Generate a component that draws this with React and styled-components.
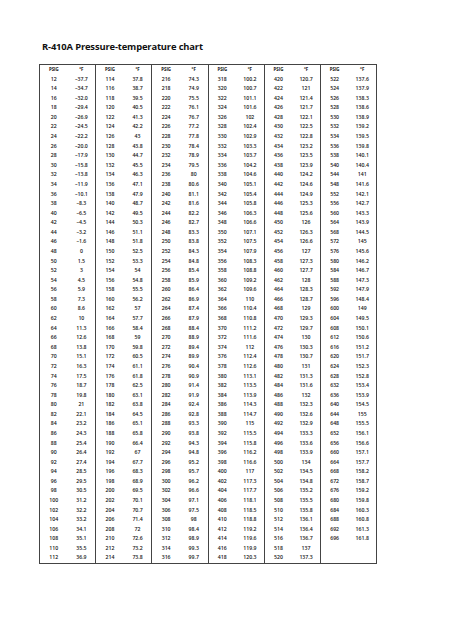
import React from "react";
import styled, { createGlobalStyle } from "styled-components";

const GlobalStyle = createGlobalStyle`
  html, body {
    margin: 0;
    padding: 0;
    background: #ffffff;
  }
  body {
    font-family: "Open Sans", "Liberation Sans", sans-serif;
    color: #1a1a1a;
  }
`;

// degrees F for each pair of columns, psig is worked out from the row
const temps = [
  [-37.7, -34.7, "-32.0", -29.4, -26.9, -24.5, -22.2, "-20.0", -17.9, -15.8, -13.8, -11.9, -10.1, -8.3, -6.5, -4.5, -3.2, -1.6, 0, 1.5, 3, 4.5, 5.9, 7.3, 8.6, 10, 11.3, 12.6, 13.8, 15.1, 16.3, 17.5, 18.7, 19.8, 21, 22.1, 23.2, 24.3, 25.4, 26.4, 27.4, 28.5, 29.5, 30.5, 31.2, 32.2, 33.2, 34.1, 35.1, 35.5, 36.9],
  [37.8, 38.7, 39.5, 40.5, 41.3, 42.2, 43, 43.8, 44.7, 45.5, 46.3, 47.1, 47.9, 48.7, 49.5, 50.3, 51.1, 51.8, 52.5, 53.3, 54, 54.8, 55.5, 56.2, 57, 57.7, 58.4, 59, 59.8, 60.5, 61.1, 61.8, 62.5, 63.1, 63.8, 64.5, 65.1, 65.8, 66.4, 67, 67.7, 68.3, 68.9, 69.5, 70.1, 70.7, 71.4, 72, 72.6, 73.2, 73.8],
  [74.3, 74.9, 75.5, 76.1, 76.7, 77.2, 77.8, 78.4, 78.9, 79.5, 80, 80.6, 81.1, 81.6, 82.2, 82.7, 83.3, 83.8, 84.3, 84.8, 85.4, 85.9, 86.4, 86.9, 87.4, 87.9, 88.4, 88.9, 89.4, 89.9, 90.4, 90.9, 91.4, 91.9, 92.4, 92.8, 93.3, 93.8, 94.3, 94.8, 95.2, 95.7, 96.2, 96.6, 97.1, 97.5, 98, 98.4, 98.9, 99.3, 99.7],
  [100.2, 100.7, 101.1, 101.6, 102, 102.4, 102.9, 103.3, 103.7, 104.2, 104.6, 105.1, 105.4, 105.8, 106.3, 106.6, 107.1, 107.5, 107.9, 108.3, 108.8, 109.2, 109.6, 110, 110.4, 110.8, 111.2, 111.6, 112, 112.4, 112.6, 113.1, 113.5, 113.9, 114.3, 114.7, 115, 115.5, 115.8, 116.2, 116.6, 117, 117.3, 117.7, 118.1, 118.5, 118.8, 119.2, 119.6, 119.9, 120.3],
  [120.7, 121, 121.4, 121.7, 122.1, 122.5, 122.8, 123.2, 123.5, 123.9, 124.2, 124.6, 124.9, 125.3, 125.6, 126, 126.3, 126.6, 127, 127.3, 127.7, 128, 128.3, 128.7, 129, 129.3, 129.7, 130, 130.3, 130.7, 131, 131.3, 131.6, 132, 132.3, 132.6, 132.9, 133.3, 133.6, 133.9, 134, 134.5, 134.8, 135.2, 135.5, 135.8, 136.1, 136.4, 136.7, 137, 137.3],
  [137.6, 137.9, 138.3, 138.6, 138.9, 139.2, 139.5, 139.8, 140.1, 140.4, 141, 141.6, 142.1, 142.7, 143.3, 143.9, 144.5, 145, 145.6, 146.2, 146.7, 147.3, 147.9, 148.4, 149, 149.5, 150.1, 150.6, 151.2, 151.7, 152.3, 152.8, 153.4, 153.9, 154.5, 155, 155.5, 156.1, 156.6, 157.1, 157.7, 158.2, 158.7, 159.2, 159.8, 160.3, 160.8, 161.3, 161.8],
];

const ROWS = 51;

function psigFor(pair, i) {
  if (pair < 5) return 12 + pair * 102 + i * 2;
  return i < 10 ? 522 + i * 2 : 540 + (i - 9) * 4;
}

function fmt(v) {
  return String(v).replace("-", "\u2013");
}

const Page = styled.div`
  padding: 41px 0 0 39px;
`;

const Title = styled.h1`
  margin: 0 0 11px 3px;
  font-family: "Open Sans", "Liberation Sans", sans-serif;
  font-size: 9.4px;
  line-height: 12px;
  font-weight: 700;
  letter-spacing: -0.15px;
  color: #111;
`;

const Chart = styled.div`
  display: flex;
  width: 336px;
  border: 1px solid #444;
`;

const Pair = styled.div`
  flex: 1;
  display: flex;
  flex-direction: column;
  border-left: ${(p) => (p.$first ? "none" : "1px solid #444")};
`;

const Row = styled.div`
  display: grid;
  grid-template-columns: 1fr 1fr;
  height: 9.59px;
  line-height: 9.59px;
  font-size: ${(p) => (p.$head ? "4.4px" : "5.2px")};
  font-weight: ${(p) => (p.$head ? 700 : 600)};
  color: #151515;
`;

const Cell = styled.span`
  text-align: center;
  white-space: nowrap;
`;

export default function App() {
  return (
    <Page>
      <GlobalStyle />
      <Title>R-410A Pressure-temperature chart</Title>
      <Chart>
        {temps.map((col, p) => (
          <Pair key={p} $first={p === 0}>
            <Row $head>
              <Cell>PSIG</Cell>
              <Cell>°F</Cell>
            </Row>
            {Array.from({ length: ROWS }).map((_, i) => (
              <Row key={i}>
                <Cell>{i < col.length ? psigFor(p, i) : ""}</Cell>
                <Cell>{i < col.length ? fmt(col[i]) : ""}</Cell>
              </Row>
            ))}
          </Pair>
        ))}
      </Chart>
    </Page>
  );
}
